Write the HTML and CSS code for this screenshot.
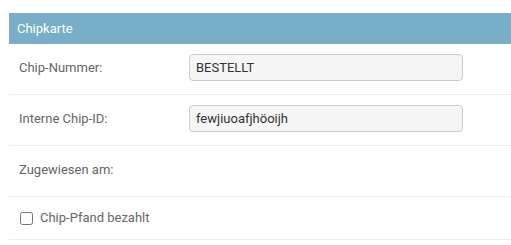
FILE: index.html
```html
<!DOCTYPE html>
<html lang="de">
<head>
  <meta charset="UTF-8">
  <meta name="viewport" content="width=device-width, initial-scale=1.0">
  <title>Chipkarte ändern</title>
  <link rel="stylesheet" href="styles.css">
</head>
<body>
  <fieldset class="module aligned">
    <h2>Chipkarte</h2>
    <div class="form-row">
      <label for="id_chip_nummer">Chip-Nummer:</label>
      <input type="text" class="vTextField" id="id_chip_nummer" value="BESTELLT">
    </div>
    <div class="form-row">
      <label for="id_chip_id">Interne Chip-ID:</label>
      <input type="text" class="vTextField" id="id_chip_id" value="fewjiuoafjhöoijh">
    </div>
    <div class="form-row">
      <label>Zugewiesen am:</label>
      <div class="readonly"></div>
    </div>
    <div class="form-row checkbox-row">
      <input type="checkbox" id="id_pfand">
      <label for="id_pfand" class="vCheckboxLabel">Chip-Pfand bezahlt</label>
    </div>
  </fieldset>
</body>
</html>
```

FILE: styles.css
```css
* {
  box-sizing: border-box;
}
body {
  margin: 0;
  padding: 13px 0 0 9px;
  font-family: Roboto, "Liberation Sans", sans-serif;
  font-size: 13px;
  color: #333;
  background: #fff;
}
.module {
  border: none;
  margin: 0;
  padding: 0;
  min-width: 0;
}
.module h2 {
  margin: 0;
  padding: 8px;
  font-weight: 400;
  font-size: 13px;
  line-height: 15px;
  background: #79aec8;
  color: #fff;
}
.form-row {
  display: flex;
  align-items: flex-start;
  min-height: 51px;
  padding: 10px;
  border-bottom: 1px solid #eee;
}
.aligned label {
  width: 170px;
  flex-shrink: 0;
  padding: 6px 10px 0 0;
  line-height: 16px;
  color: #666;
}
.vTextField {
  width: 274px;
  height: 27px;
  margin: 0;
  padding: 5px 6px;
  border: 1px solid #ccc;
  border-radius: 4px;
  background: #f5f5f5;
  font-family: inherit;
  font-size: 13px;
  color: #333;
}
.readonly {
  min-height: 30px;
}
.checkbox-row {
  min-height: 43px;
  align-items: center;
}
.checkbox-row input {
  width: 13px;
  height: 13px;
  margin: 0 0 0 1px;
}
.aligned .vCheckboxLabel {
  width: auto;
  padding: 0 0 0 7px;
}
```
